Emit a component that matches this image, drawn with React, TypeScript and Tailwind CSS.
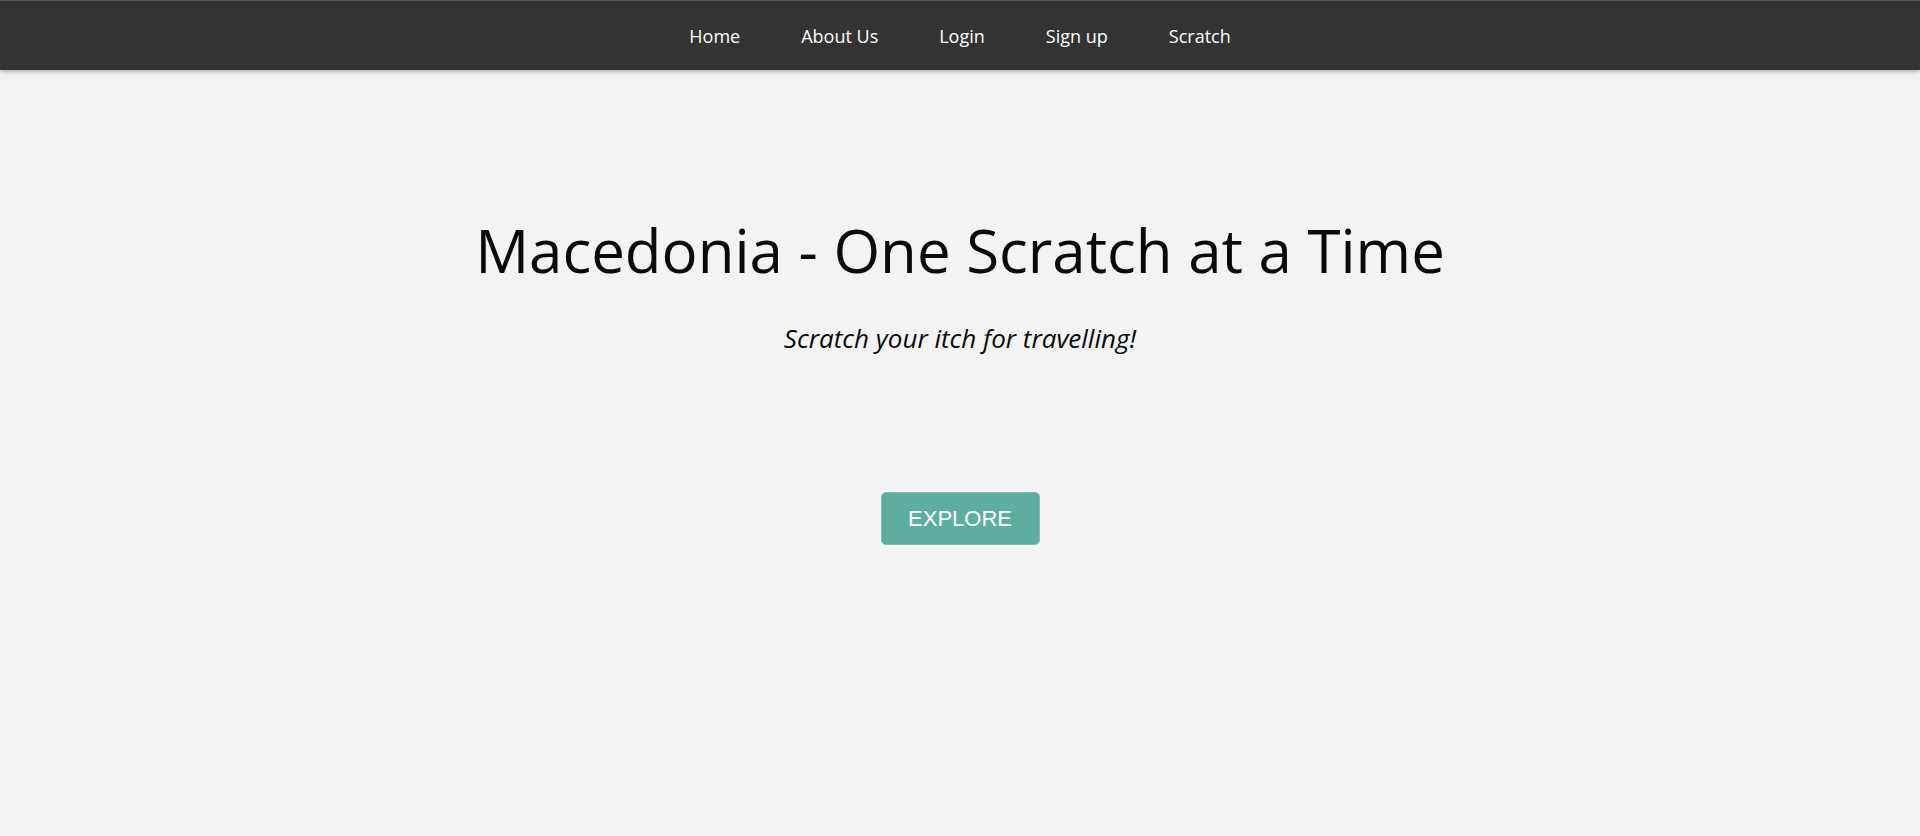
import React from 'react';

const links = ['Home', 'About Us', 'Login', 'Sign up', 'Scratch'];

export default function App() {
  return (
    <div className="min-h-[836px] bg-[#f3f3f3] font-['Open_Sans',sans-serif]">
      {/* Top navigation */}
      <nav className="relative z-10 h-[70px] bg-[#333333] border-t border-[#5a5a66] shadow-[0_2px_4px_rgba(0,0,0,0.25)] flex items-center justify-center gap-[61px]">
        {links.map((l) => (
          <a key={l} href="#" className="text-white text-[18px] leading-none">
            {l}
          </a>
        ))}
      </nav>

      {/* Hero */}
      <main className="flex flex-col items-center pt-[150px]">
        <h1 className="text-[60px] font-normal leading-none text-[#0a0a0a]">
          Macedonia - One Scratch at a Time
        </h1>
        <p className="mt-[45px] text-[26px] italic leading-none text-[#0a0a0a]">
          Scratch your itch for travelling!
        </p>
        <button className="mt-[141px] w-[159px] h-[53px] rounded-[5px] bg-[#5dae9f] border border-[#7cc0b3] text-white text-[22px] font-['Liberation_Sans',Arial,sans-serif]">
          EXPLORE
        </button>
      </main>
    </div>
  );
}
